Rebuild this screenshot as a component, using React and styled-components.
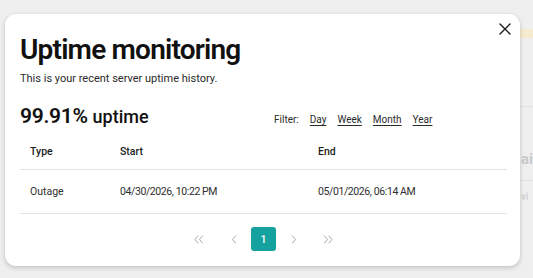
import React from 'react'
import styled, { createGlobalStyle } from 'styled-components'

const GlobalStyle = createGlobalStyle`
  html, body {
    margin: 0;
    padding: 0;
    background: #efefef;
    font-family: Roboto, "Noto Sans", "Liberation Sans", sans-serif;
    color: #1b1b1b;
  }
`

const Backdrop = styled.div`
  position: relative;
  width: 533px;
  height: 278px;
  overflow: hidden;
  background: #efefef;
  padding: 14px 0 0 5px;
  box-sizing: border-box;
`

// faint page sitting behind the dialog
const Behind = styled.div`
  position: absolute;
  inset: 0;
  pointer-events: none;
`

const BehindStrip = styled.div`
  position: absolute;
  left: 520px;
  top: 29px;
  width: 13px;
  height: 9px;
  background: #f5ecd0;
`

const BehindText = styled.div`
  position: absolute;
  left: ${({ x }) => x}px;
  top: ${({ y }) => y}px;
  font-size: ${({ size }) => size}px;
  font-weight: ${({ weight }) => weight || 400};
  color: #c9c9c9;
  white-space: nowrap;
`

const BehindRule = styled.div`
  position: absolute;
  left: 520px;
  top: ${({ y }) => y}px;
  width: 13px;
  height: 1px;
  background: #e2e2e2;
`

const Modal = styled.div`
  position: relative;
  width: 515px;
  height: 252px;
  box-sizing: border-box;
  background: #fff;
  border-radius: 11px;
  box-shadow: 0 2px 5px rgba(0, 0, 0, 0.18), 0 0 2px rgba(0, 0, 0, 0.06);
  padding: 18px 13px 0 15px;
  display: flex;
  flex-direction: column;
`

const CloseButton = styled.button`
  position: absolute;
  top: 8px;
  right: 8px;
  width: 14px;
  height: 14px;
  padding: 0;
  border: 0;
  background: none;
  display: flex;
  align-items: center;
  justify-content: center;
  cursor: pointer;
`

const Title = styled.h1`
  margin: 0;
  font-size: 28px;
  line-height: 35px;
  font-weight: 600;
  letter-spacing: -0.8px;
  color: #111;
`

const Subtitle = styled.p`
  margin: 5px 0 0;
  font-size: 11px;
  line-height: 14px;
  color: #2a2a2a;
`

const StatsRow = styled.div`
  display: flex;
  align-items: baseline;
  margin-top: 18px;
  height: 26px;
`

const Uptime = styled.div`
  width: 254px;
  font-size: 21px;
  font-weight: 600;
  letter-spacing: -0.3px;
  color: #111;
  white-space: nowrap;

  span {
    font-size: 18px;
    font-weight: 500;
    letter-spacing: 0;
  }
`

const Filters = styled.div`
  display: flex;
  align-items: baseline;
  gap: 11px;
  font-size: 10px;
  color: #2a2a2a;
`

const FilterLink = styled.a`
  color: #2a2a2a;
  text-decoration: underline;
  text-underline-offset: 2px;
  cursor: pointer;
`

const Table = styled.div`
  margin-top: 3px;
  display: flex;
  flex-direction: column;
`

const Row = styled.div`
  display: grid;
  grid-template-columns: 90px 198px 1fr;
  height: ${({ head }) => (head ? 36 : 43)}px;
  align-items: center;
  border-bottom: 1px solid #e3e3e3;
  font-size: 10.5px;
  font-weight: ${({ head }) => (head ? 500 : 400)};
  color: ${({ head }) => (head ? '#1b1b1b' : '#2e2e2e')};
`

const Cell = styled.div`
  padding-left: 10px;
  white-space: nowrap;
  letter-spacing: ${({ date }) => (date ? '-0.4px' : '0')};
`

const Pager = styled.div`
  display: flex;
  justify-content: center;
  align-items: center;
  gap: 5px;
  margin-top: 13px;
`

const PageItem = styled.button`
  width: 25px;
  height: 24px;
  padding: 0;
  border: 0;
  border-radius: 3px;
  display: flex;
  align-items: center;
  justify-content: center;
  font-family: inherit;
  font-size: 10.5px;
  font-weight: 500;
  background: ${({ active }) => (active ? '#15a19d' : 'transparent')};
  color: ${({ active }) => (active ? '#fff' : '#a8a8a8')};
  margin: ${({ edge }) => (edge === 'first' ? '0 5px 0 0' : edge === 'last' ? '0 0 0 5px' : '0')};
  cursor: pointer;
`

const Chevron = ({ double, dir }) => (
  <svg width={double ? 11 : 6} height="9" viewBox={double ? '0 0 11 9' : '0 0 6 9'} fill="none"
    stroke="#a8a8a8" strokeWidth="1" strokeLinecap="round" strokeLinejoin="round">
    <g transform={dir === 'left' ? `scale(-1,1) translate(${double ? -11 : -6},0)` : undefined}>
      <path d="M1.5 1 L4.5 4.5 L1.5 8" />
      {double && <path d="M6 1 L9 4.5 L6 8" />}
    </g>
  </svg>
)

export default function App() {
  return (
    <>
      <GlobalStyle />
      <Backdrop>
        <Behind>
          <BehindStrip />
          <BehindRule y={106} />
          <BehindRule y={180} />
          <BehindText x={521} y={150} size={15} weight={700}>ai</BehindText>
          <BehindText x={521} y={191} size={10}>vi</BehindText>
        </Behind>
        <Modal>
          <CloseButton aria-label="Close">
            <svg width="12" height="12" viewBox="0 0 12 12" stroke="#1b1b1b" strokeWidth="1.4" strokeLinecap="round">
              <path d="M1 1 L11 11 M11 1 L1 11" />
            </svg>
          </CloseButton>
          <Title>Uptime monitoring</Title>
          <Subtitle>This is your recent server uptime history.</Subtitle>
          <StatsRow>
            <Uptime>
              99.91% <span>uptime</span>
            </Uptime>
            <Filters>
              <span>Filter:</span>
              <FilterLink>Day</FilterLink>
              <FilterLink>Week</FilterLink>
              <FilterLink>Month</FilterLink>
              <FilterLink>Year</FilterLink>
            </Filters>
          </StatsRow>
          <Table>
            <Row head>
              <Cell>Type</Cell>
              <Cell>Start</Cell>
              <Cell>End</Cell>
            </Row>
            <Row>
              <Cell>Outage</Cell>
              <Cell date>04/30/2026, 10:22 PM</Cell>
              <Cell date>05/01/2026, 06:14 AM</Cell>
            </Row>
          </Table>
          <Pager>
            <PageItem edge="first"><Chevron double dir="left" /></PageItem>
            <PageItem><Chevron dir="left" /></PageItem>
            <PageItem active>1</PageItem>
            <PageItem><Chevron /></PageItem>
            <PageItem edge="last"><Chevron double /></PageItem>
          </Pager>
        </Modal>
      </Backdrop>
    </>
  )
}
